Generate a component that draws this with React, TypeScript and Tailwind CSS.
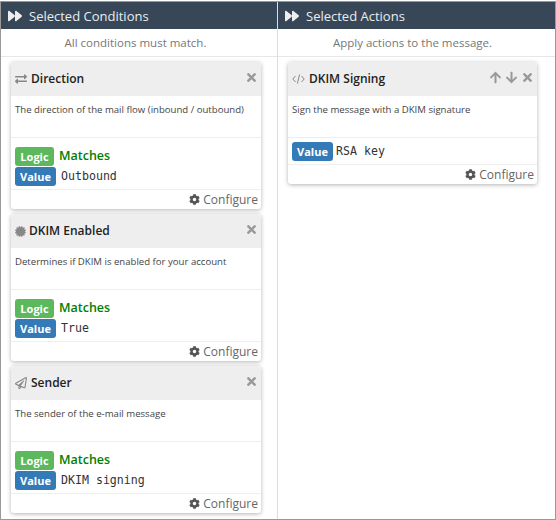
import React from "react";
import { FaForward, FaTimes, FaCog, FaArrowUp, FaArrowDown, FaExchangeAlt, FaCertificate, FaRegPaperPlane } from "react-icons/fa";

function Badge({ color, children }: { color: "green" | "blue"; children: React.ReactNode }) {
  return (
    <span className={`inline-flex h-[19px] shrink-0 items-center justify-center rounded-[3px] pb-px text-[11px] font-bold leading-none text-white ${color === "green" ? "w-[39px] bg-[#5cb85c]" : "w-[41px] bg-[#337ab7]"}`}>
      {children}
    </span>
  );
}

function CodeIcon() {
  return (
    <svg width="13" height="12" viewBox="0 0 13 12" fill="none" stroke="#888" strokeWidth="1" className="shrink-0">
      <path d="M3.5 3 L0.8 6 L3.5 9" />
      <path d="M9.5 3 L12.2 6 L9.5 9" />
      <path d="M7.6 1.5 L5.4 10.5" />
    </svg>
  );
}

function Card({ icon, title, desc, logic = true, value, arrows = false }: { icon: React.ReactNode; title: string; desc: string; logic?: boolean; value: string; arrows?: boolean }) {
  return (
    <div className="overflow-hidden rounded-[3px] bg-white shadow-[0_1px_4px_rgba(0,0,0,0.3)]">
      <div className="flex h-[34px] items-center justify-between bg-[#eeeeee] pl-[4px] pr-[3px]">
        <div className="flex items-center gap-[4px] text-[12px] font-semibold text-[#222]">
          {icon}
          <span>{title}</span>
        </div>
        <div className="mb-[4px] flex items-center gap-[3px] text-[13px] text-[#999]">
          {arrows && <FaArrowUp />}
          {arrows && <FaArrowDown />}
          <FaTimes />
        </div>
      </div>
      <div className="h-[42px] border-b border-[#eee] px-[4px] pt-[7px] text-[9.6px] leading-[14px] text-[#444]">{desc}</div>
      {logic ? (
        <div className="flex flex-col gap-px pb-[3px] pl-[4px] pt-[9px]">
          <div className="flex h-[19px] items-center gap-[5px]">
            <Badge color="green">Logic</Badge>
            <span className="text-[12.5px] font-semibold text-[#008000]">Matches</span>
          </div>
          <div className="flex h-[19px] items-center gap-[5px]">
            <Badge color="blue">Value</Badge>
            <span className="font-['DejaVu_Sans_Mono',monospace] text-[11.6px] text-[#333]">{value}</span>
          </div>
        </div>
      ) : (
        <div className="flex h-[26px] items-start gap-[3px] pl-[4px] pt-[4px]">
          <Badge color="blue">Value</Badge>
          <span className="font-['DejaVu_Sans_Mono',monospace] text-[11.6px] leading-[19px] text-[#333]">{value}</span>
        </div>
      )}
      <div className="flex h-[20px] items-center justify-end gap-[3px] border-t border-[#eee] pr-[3px] text-[12px] text-[#666]">
        <FaCog className="text-[11px] text-[#555]" />
        <span>Configure</span>
      </div>
    </div>
  );
}

function Column({ title, sub, children, className, bodyClass, subClass }: { title: string; sub: string; children: React.ReactNode; className: string; bodyClass: string; subClass: string }) {
  return (
    <div className={`flex flex-col ${className}`}>
      <div className="flex h-[27px] items-center gap-[7px] bg-[#374757] pl-[7px] pt-[2px] text-[13px] text-[#e9eef0]">
        <FaForward className="mb-[2px] text-[14px] text-[#eeeeee]" />
        <span>{title}</span>
      </div>
      <div className={`flex h-[28px] items-center justify-center border-b border-[#e7e7e7] text-[11.5px] text-[#777] ${subClass}`}>{sub}</div>
      <div className={`flex flex-col gap-[5px] pl-[10px] pt-[5px] ${bodyClass}`}>{children}</div>
    </div>
  );
}

export default function App() {
  return (
    <div className="h-[520px] w-[556px] bg-white pt-px font-['Open_Sans',sans-serif]">
      <div className="flex h-[519px] border border-[#999]">
        <Column title="Selected Conditions" sub="All conditions must match." className="w-[277px] border-r border-[#ddd]" bodyClass="pr-[16px]" subClass="pr-[7px]">
          <Card icon={<FaExchangeAlt className="text-[12px] text-[#888]" />} title="Direction" desc="The direction of the mail flow (inbound / outbound)" value="Outbound" />
          <Card icon={<FaCertificate className="-mr-px text-[11px] text-[#888]" />} title="DKIM Enabled" desc="Determines if DKIM is enabled for your account" value="True" />
          <Card icon={<FaRegPaperPlane className="text-[12px] text-[#888]" />} title="Sender" desc="The sender of the e-mail message" value="DKIM signing" />
        </Column>
        <Column title="Selected Actions" sub="Apply actions to the message." className="flex-1" bodyClass="pr-[18px]" subClass="pr-[8px]">
          <Card icon={<CodeIcon />} title="DKIM Signing" desc="Sign the message with a DKIM signature" logic={false} value="RSA key" arrows />
        </Column>
      </div>
    </div>
  );
}
